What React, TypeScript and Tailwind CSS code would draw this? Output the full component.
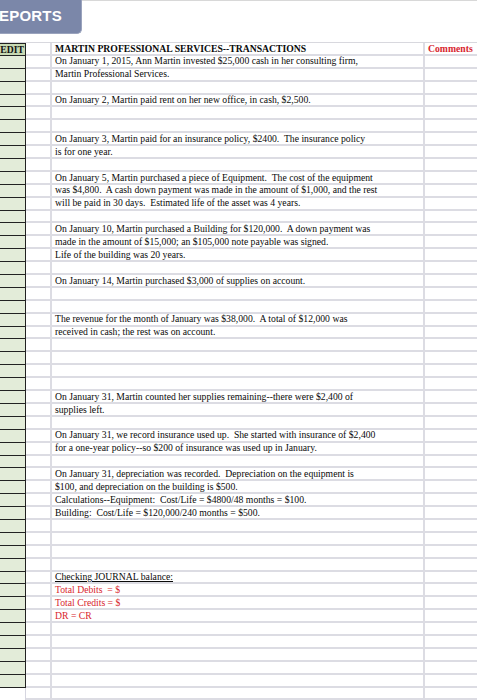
import React from "react";

type Row = { text?: string; kind?: "bold" | "red" | "underline" };

const lines: Record<number, Row> = {
	0: { text: "MARTIN PROFESSIONAL SERVICES--TRANSACTIONS", kind: "bold" },
	1: { text: "On January 1, 2015, Ann Martin invested $25,000 cash in her consulting firm," },
	2: { text: "Martin Professional Services." },
	4: { text: "On January 2, Martin paid rent on her new office, in cash, $2,500." },
	7: { text: "On January 3, Martin paid for an insurance policy, $2400.  The insurance policy" },
	8: { text: "is for one year." },
	10: { text: "On January 5, Martin purchased a piece of Equipment.  The cost of the equipment" },
	11: { text: "was $4,800.  A cash down payment was made in the amount of $1,000, and the rest" },
	12: { text: "will be paid in 30 days.  Estimated life of the asset was 4 years." },
	14: { text: "On January 10, Martin purchased a Building for $120,000.  A down payment was" },
	15: { text: "made in the amount of $15,000; an $105,000 note payable was signed." },
	16: { text: "Life of the building was 20 years." },
	18: { text: "On January 14, Martin purchased $3,000 of supplies on account." },
	21: { text: "The revenue for the month of January was $38,000.  A total of $12,000 was" },
	22: { text: "received in cash; the rest was on account." },
	27: { text: "On January 31, Martin counted her supplies remaining--there were $2,400 of" },
	28: { text: "supplies left." },
	30: { text: "On January 31, we record insurance used up.  She started with insurance of $2,400" },
	31: { text: "for a one-year policy--so $200 of insurance was used up in January." },
	33: { text: "On January 31, depreciation was recorded.  Depreciation on the equipment is" },
	34: { text: "$100, and depreciation on the building is $500." },
	35: { text: "Calculations--Equipment:  Cost/Life = $4800/48 months = $100." },
	36: { text: "Building:  Cost/Life = $120,000/240 months = $500." },
	41: { text: "Checking JOURNAL balance:", kind: "underline" },
	42: { text: "Total Debits  = $", kind: "red" },
	43: { text: "Total Credits = $", kind: "red" },
	44: { text: "DR = CR", kind: "red" },
};

const ROWS = 51;

function textClass(kind?: Row["kind"]) {
	if (kind === "bold") return "font-bold text-[#0a0a0a]";
	if (kind === "red") return "text-[#d8262e]";
	if (kind === "underline") return "underline text-[#0a0a0a]";
	return "text-[#0a0a0a]";
}

export default function App() {
	return (
		<div
			className="w-[477px] h-[700px] bg-white overflow-hidden relative"
			style={{ fontFamily: '"Liberation Serif", "Times New Roman", serif' }}
		>
			<div className="h-[42px] border-t border-[#d8d8d8] flex items-start">
				<div className="w-[82px] h-[34px] bg-[#7b87a9] rounded-br-[5px] border-r border-b border-[#9aa3bd] flex items-center -mt-px">
					<span
						className="text-white font-bold text-[15px] leading-none -ml-[1px] -mt-[2px] tracking-[0.2px]"
						style={{ fontFamily: '"Liberation Sans", Arial, sans-serif' }}
					>
						EPORTS
					</span>
				</div>
			</div>
			<div className="flex flex-col border-t border-[#d8d8de]">
				{Array.from({ length: ROWS }).map((_, i) => {
					const row = lines[i];
					const header = i === 0;
					const green = i < 50;
					return (
						<div key={i} className="flex h-[12.9px] text-[9.7px] leading-none">
							<div
								className={
									green
										? `w-[26px] shrink-0 border-r border-b border-[#222] ${header ? "bg-[#c7d9b3] border-t" : "bg-[#e3ecd9]"} flex items-center justify-end pr-[1px]`
										: "w-[26px] shrink-0 border-r border-[#d6d6e0]"
								}
							>
								{header && <span className="font-bold text-[#111]">EDIT</span>}
							</div>
							<div className="w-[26px] shrink-0 border-r-2 border-b-2 border-[#dcdce3]" />
							<div className="w-[373px] shrink-0 border-r-2 border-b-2 border-[#dcdce3] flex items-center pl-[3px] whitespace-pre overflow-hidden">
								{row?.text && <span className={textClass(row.kind)}>{row.text}</span>}
							</div>
							<div className="flex-1 border-b-2 border-[#dcdce3] flex items-center pl-[3px]">
								{header && <span className="font-bold text-[#d8262e]">Comments</span>}
							</div>
						</div>
					);
				})}
			</div>
		</div>
	);
}
